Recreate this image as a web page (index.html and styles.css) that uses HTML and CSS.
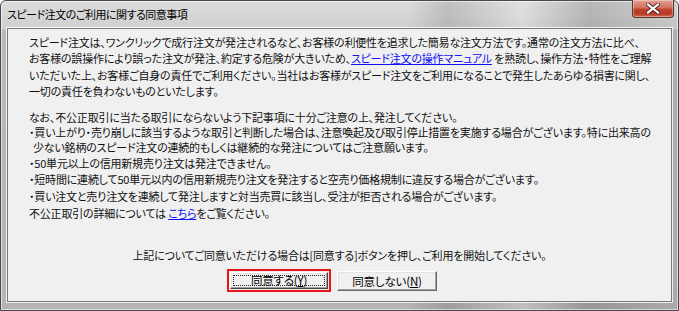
FILE: index.html
```html
<!DOCTYPE html>
<html lang="ja">
<head>
    <meta charset="utf-8">
    <title>スピード注文のご利用に関する同意事項</title>
    <link rel="stylesheet" href="styles.css">
</head>
<body>
<div class="window">
    <div class="titlebar">
        <span class="title">スピード注文のご利用に関する同意事項</span>
        <div class="close">
            <svg width="14" height="11" viewBox="0 0 14 11">
                <path d="M2 1.5 L12 9.5 M12 1.5 L2 9.5" stroke="#4a2420" stroke-width="4" stroke-linecap="square" fill="none"/>
                <path d="M2 1.5 L12 9.5 M12 1.5 L2 9.5" stroke="#ffffff" stroke-width="2.2" stroke-linecap="square" fill="none"/>
            </svg>
        </div>
    </div>
    <div class="client">
        <div class="content">
            <p class="lead">
                スピード注文は、ワンクリックで成行注文が発注されるなど、お客様の利便性を追求した簡易な注文方法です。通常の注文方法に比べ、<br>
                お客様の誤操作により誤った注文が発注、約定する危険が大きいため、<a href="#">スピード注文の操作マニュアル</a> を熟読し、操作方法・特性をご理解<br>
                いただいた上、お客様ご自身の責任でご利用ください。当社はお客様がスピード注文をご利用になることで発生したあらゆる損害に関し、<br>
                一切の責任を負わないものといたします。
            </p>
            <p class="intro">なお、不公正取引に当たる取引にならないよう下記事項に十分ご注意の上、発注してください。</p>
            <ul class="notes">
                <li class="wrap">・買い上がり・売り崩しに該当するような取引と判断した場合は、注意喚起及び取引停止措置を実施する場合がございます。特に出来高の<br><span class="indent">少ない銘柄のスピード注文の連続的もしくは継続的な発注についてはご注意願います。</span></li>
                <li>・50単元以上の信用新規売り注文は発注できません。</li>
                <li>・短時間に連続して50単元以内の信用新規売り注文を発注すると空売り価格規制に違反する場合がございます。</li>
                <li>・買い注文と売り注文を連続して発注しますと対当売買に該当し、受注が拒否される場合がございます。</li>
            </ul>
            <p class="more">不公正取引の詳細については <a href="#">こちら</a>をご覧ください。</p>
        </div>
        <p class="confirm">上記についてご同意いただける場合は[同意する]ボタンを押し、ご利用を開始してください。</p>
        <div class="buttons">
            <div class="highlight">
                <button class="btn focused">同意する(<u>Y</u>)</button>
            </div>
            <button class="btn">同意しない(<u>N</u>)</button>
        </div>
    </div>
</div>
</body>
</html>
```

FILE: styles.css
```css
html, body {
    margin: 0;
    padding: 0;
}

body {
    width: 679px;
    height: 311px;
    font-family: "Noto Sans CJK JP", "DejaVu Sans", sans-serif;
    font-size: 11px;
    letter-spacing: -0.2px;
    color: #111;
    font-feature-settings: "palt";
}

.window {
    position: relative;
    width: 679px;
    height: 311px;
    box-sizing: border-box;
    border: 1px solid #4a4a4a;
    border-radius: 6px 6px 0 0;
    padding: 27px 6px 8px 6px;
    display: flex;
    flex-direction: column;
    background:
        linear-gradient(90deg, rgba(255,255,255,0) 0, rgba(255,255,255,0) 60%, rgba(0,0,0,0.12) 66%, rgba(255,255,255,0.15) 77%, rgba(0,0,0,0.16) 87%, rgba(0,0,0,0.05) 100%),
        linear-gradient(180deg, #dcdcdc 0, #d0d0d0 28px, #b9b9b9 29px, #b4b4b4 100%);
    box-shadow: inset 0 0 0 1px rgba(255,255,255,0.55);
}

.titlebar {
    position: absolute;
    top: 0;
    left: 0;
    right: 0;
    height: 26px;
}

.title {
    position: absolute;
    left: 6px;
    top: 5px;
    font-size: 11px;
    letter-spacing: -0.5px;
    line-height: 16px;
    color: #000;
}

.close {
    position: absolute;
    top: -1px;
    right: 4px;
    width: 42px;
    height: 18px;
    box-sizing: border-box;
    border: 1px solid #5a3631;
    border-top: none;
    border-radius: 0 0 4px 4px;
    background: linear-gradient(180deg, #e2a194 0, #d2705f 45%, #c0412d 55%, #b93a26 80%, #d06a4e 100%);
    box-shadow: inset 0 0 0 1px rgba(255,255,255,0.35);
    display: flex;
    align-items: center;
    justify-content: center;
}

.client {
    flex: 1;
    display: flex;
    flex-direction: column;
    background: #f0f0f0;
    border: 1px solid #777;
    box-shadow: 0 0 0 1px rgba(255,255,255,0.8);
    padding: 5px 0 9px 21px;
}

.content p,
.notes {
    margin: 0;
    padding: 0;
    list-style: none;
    white-space: nowrap;
}

.lead {
    line-height: 16.4px;
}

.intro {
    margin-top: 9px !important;
    line-height: 16px;
}

.notes li {
    line-height: 16.8px;
}

.notes li.wrap {
    line-height: 15px;
}

.indent {
    padding-left: 4px;
}

.more {
    line-height: 16.8px;
}

a {
    color: #1010f0;
    text-decoration: underline;
}

.confirm {
    margin: auto 0 6px -21px;
    text-align: center;
    line-height: 16px;
    white-space: nowrap;
}

.buttons {
    display: flex;
    justify-content: center;
    align-items: center;
    gap: 6px;
    margin-left: -21px;
    padding-right: 15px;
}

.highlight {
    border: 2px solid #e8141b;
    padding: 1px;
    background: #f0f0f0;
}

.btn {
    width: 100px;
    height: 20px;
    box-sizing: border-box;
    margin: 0;
    padding: 0;
    font-family: inherit;
    font-size: 11.5px;
    letter-spacing: -0.2px;
    font-feature-settings: "palt";
    color: #000;
    background: #f0f0f0;
    border: 1px solid;
    border-color: #fff #696969 #696969 #fff;
    box-shadow: inset -1px -1px 0 #a0a0a0, inset 1px 1px 0 #e3e3e3;
    line-height: 16px;
}

.btn.focused {
    width: 98px;
    height: 17px;
    border-color: #fff #444 #444 #fff;
    outline: 1px dotted #222;
    outline-offset: -4px;
    line-height: 13px;
}
```
